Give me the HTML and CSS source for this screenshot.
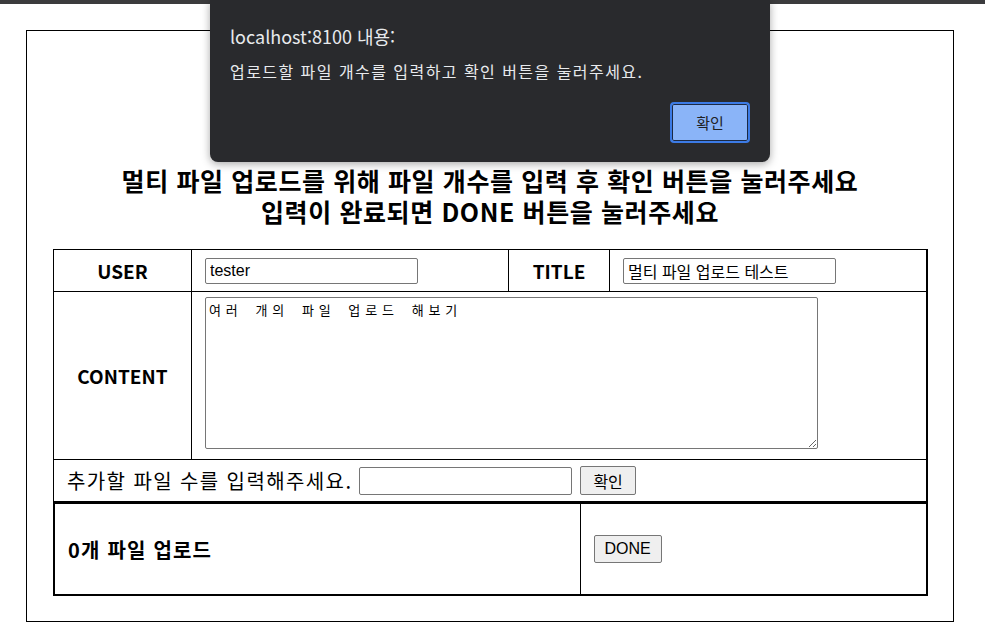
FILE: index.html
```html
<!DOCTYPE html>
<html lang="ko">
<head>
<meta charset="utf-8">
<title>멀티 파일 업로드</title>
<link rel="stylesheet" href="styles.css">
</head>
<body>
<div class="topbar"></div>
<div class="page">
  <h2 class="heading"><span class="hline">멀티 파일 업로드를 위해 파일 개수를 입력 후 확인 버튼을 눌러주세요</span><span class="hline">입력이 완료되면 DONE 버튼을 눌러주세요</span></h2>
  <table class="form-table">
    <colgroup><col class="c1"><col class="c2"><col class="c3"><col class="c4"></colgroup>
    <tr class="row-short">
      <th>USER</th>
      <td><input class="field" type="text" value="tester"></td>
      <th>TITLE</th>
      <td><input class="field" type="text" value="멀티 파일 업로드 테스트"></td>
    </tr>
    <tr class="row-content">
      <th>CONTENT</th>
      <td colspan="3" class="area-cell"><textarea class="area">여러 개의 파일 업로드 해보기</textarea></td>
    </tr>
    <tr class="row-short">
      <td colspan="4" class="count-cell">
        <span class="count-label">추가할 파일 수를 입력해주세요.</span>
        <input class="field count-input" type="text">
        <button class="btn">확인</button>
      </td>
    </tr>
  </table>
  <table class="done-table">
    <colgroup><col class="d1"><col class="d2"></colgroup>
    <tr>
      <td class="files">0개 파일 업로드</td>
      <td class="done-cell"><button class="btn done-btn">DONE</button></td>
    </tr>
  </table>
</div>

<div class="dialog">
  <div class="dialog-title">localhost:8100 내용:</div>
  <div class="dialog-msg">업로드할 파일 개수를 입력하고 확인 버튼을 눌러주세요.</div>
  <div class="dialog-actions"><button class="dialog-btn">확인</button></div>
</div>
</body>
</html>
```
FILE: styles.css
```css
html, body {
  margin: 0;
  padding: 0;
  background: #fff;
  font-family: "Noto Sans CJK KR", "Noto Sans", sans-serif;
  color: #000;
}

.topbar {
  height: 4px;
  background: #3b3b3d;
}

.page {
  box-sizing: border-box;
  width: 928px;
  height: 592px;
  margin: 26px 0 0 26px;
  border: 1px solid #000;
  padding: 134px 0 0 26px;
}

.heading {
  margin: 0 0 22px 0;
  width: 874px;
  text-align: center;
  font-size: 25px;
  letter-spacing: 0.6px;
  font-weight: 700;
  line-height: 31px;
}

.hline {
  display: block;
  height: 31px;
}

.form-table,
.done-table {
  border-collapse: collapse;
  table-layout: fixed;
  width: 873px;
}

.form-table th,
.form-table td {
  border: 1px solid #000;
  padding: 0 0 0 13px;
}

.form-table th { padding: 0; }

.form-table { border-right: 2px solid #000; }

.c1 { width: 138px; }
.c2 { width: 317px; }
.c3 { width: 101px; }
.c4 { width: 317px; }

.form-table th {
  font-size: 19px;
  font-weight: 700;
  text-align: center;
}

.row-short { height: 42px; }
.row-content { height: 168px; }

.field {
  box-sizing: border-box;
  width: 213px;
  height: 26px;
  border: 1px solid #767676;
  border-radius: 2px;
  padding: 1px 4px;
  font-family: "Liberation Sans", "Noto Sans CJK KR", sans-serif;
  font-size: 16px;
  color: #000;
  vertical-align: middle;
}

.form-table .area-cell {
  vertical-align: top;
  padding-top: 5px;
  padding-bottom: 10px;
}

.area {
  display: block;
  box-sizing: border-box;
  width: 613px;
  height: 152px;
  border: 1px solid #767676;
  border-radius: 2px;
  padding: 2px 3px;
  font-family: "DejaVu Sans Mono", "Noto Sans CJK KR", monospace;
  font-size: 13px;
  letter-spacing: 4.9px;
  color: #000;
  resize: both;
}

.form-table .count-cell {
  font-size: 0;
  padding-left: 13px;
}

.count-label {
  font-size: 20px;
  letter-spacing: 1.4px;
  vertical-align: middle;
}

.count-input {
  width: 213px;
  height: 28px;
  margin-left: 7px;
}

.btn {
  box-sizing: border-box;
  height: 29px;
  padding: 0 12px;
  margin-left: 8px;
  font-family: "Noto Sans CJK KR", "Liberation Sans", sans-serif;
  font-size: 16px;
  color: #000;
  background: #efefef;
  border: 1px solid #767676;
  border-radius: 2px;
  vertical-align: middle;
}

.done-table {
  border: 2px solid #000;
  height: 94px;
}

.d1 { width: 526px; }
.d2 { width: 347px; }

.done-table td {
  border-left: 1px solid #000;
  padding: 0 0 0 13px;
}

.files {
  font-size: 20px;
  letter-spacing: 1.2px;
  font-weight: 700;
}

.done-cell { padding-top: 4px; }

.done-btn {
  margin-left: 0;
  height: 28px;
  width: 68px;
  padding: 0;
  font-family: "Liberation Sans Narrow", "Liberation Sans", sans-serif;
  font-size: 16px;
}

.dialog {
  position: absolute;
  left: 210px;
  top: 0;
  box-sizing: border-box;
  width: 560px;
  height: 162px;
  background: #292a2d;
  border-radius: 0 0 8px 8px;
  box-shadow: 0 2px 8px rgba(0, 0, 0, 0.35);
  padding: 24px 20px 0 20px;
  color: #e8eaed;
}

.dialog-title {
  font-size: 18px;
  line-height: 24px;
}

.dialog-msg {
  margin-top: 13px;
  font-size: 16px;
  letter-spacing: 1.45px;
  line-height: 20px;
}

.dialog-actions {
  display: flex;
  justify-content: flex-end;
  margin-top: 21px;
}

.dialog-btn {
  box-sizing: border-box;
  width: 80px;
  height: 41px;
  background: #8ab4f8;
  color: #202124;
  border: 2px solid #3c7be6;
  border-radius: 4px;
  box-shadow: inset 0 0 0 1px #1c2a44;
  font-family: "Noto Sans CJK KR", sans-serif;
  font-size: 15px;
}
```
